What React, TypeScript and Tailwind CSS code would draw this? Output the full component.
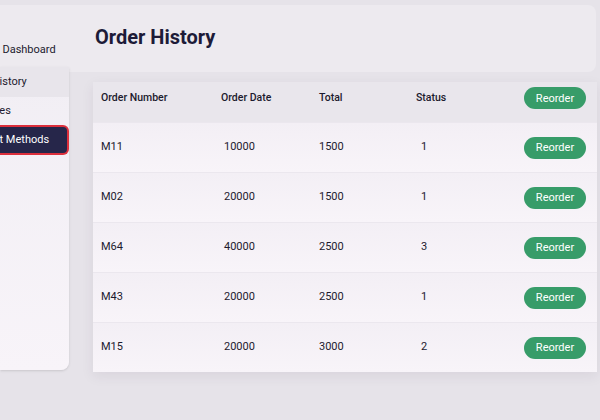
import React from 'react';

interface Order {
  number: string;
  date: string;
  total: string;
  status: string;
}

const orders: Order[] = [
  { number: 'M11', date: '10000', total: '1500', status: '1' },
  { number: 'M02', date: '20000', total: '1500', status: '1' },
  { number: 'M64', date: '40000', total: '2500', status: '3' },
  { number: 'M43', date: '20000', total: '2500', status: '1' },
  { number: 'M15', date: '20000', total: '3000', status: '2' },
];

const ReorderButton: React.FC = () => (
  <button className="w-[62px] h-[22px] rounded-full bg-[#379c69] text-white text-[11px] font-normal leading-none">
    Reorder
  </button>
);

const App: React.FC = () => {
  return (
    <div
      className="w-[600px] h-[420px] overflow-hidden bg-[#e6e3e9] pt-[5px] text-[#1c1a2e]"
      style={{ fontFamily: 'Roboto, "Liberation Sans", sans-serif' }}
    >
      {/* header */}
      <div className="flex h-[67px] w-[596px] rounded-r-lg bg-[#edeaef]">
        <div className="w-[70px] overflow-hidden pt-[37px]">
          <div className="ml-[-41px] whitespace-nowrap text-[11px] text-[#1c1a2e]">Account Dashboard</div>
        </div>
        <h1 className="ml-[25px] pt-[17px] text-[20px] font-bold text-[#1d1b38]">Order History</h1>
      </div>

      <div className="flex">
        {/* sidebar */}
        <div className="-mt-[5px] flex h-[303px] w-[69px] flex-col overflow-hidden rounded-br-lg bg-gradient-to-b from-[#f1eef4] to-[#f8f4f9] shadow-sm">
          <div className="flex h-[30px] items-center bg-[#e8e5eb]">
            <span className="ml-[-38px] whitespace-nowrap text-[11px]">Order History</span>
          </div>
          <div className="flex h-[28px] items-center">
            <span className="ml-[-34px] whitespace-nowrap text-[11px]">Favorites</span>
          </div>
          <div className="flex h-[30px] w-[69px] items-center rounded-r-md border-2 border-l-0 border-[#dc2f3c] bg-[#26264a]">
            <span className="ml-[-40px] whitespace-nowrap text-[11px] text-white">Payment Methods</span>
          </div>
        </div>

        {/* table */}
        <div className="ml-[24px] mt-[10px] w-[504px] overflow-hidden bg-[#f5f1f7] shadow-[0_4px_12px_rgba(60,40,80,0.08)]">
          <div className="flex h-[40px] items-center bg-[#e9e6ec] pb-[8px] text-[10.5px] font-medium">
            <div className="w-[128px] pl-[8px]">Order Number</div>
            <div className="w-[98px]">Order Date</div>
            <div className="w-[97px]">Total</div>
            <div className="w-[108px]">Status</div>
            <ReorderButton />
          </div>
          {orders.map((o) => (
            <div
              key={o.number}
              className="flex h-[50px] items-center border-t border-[#ebe7ee] bg-gradient-to-b from-[#f3eff5] to-[#f8f4f9] text-[11px]"
            >
              <div className="w-[128px] pl-[8px]">{o.number}</div>
              <div className="w-[98px] pl-[3px]">{o.date}</div>
              <div className="w-[97px]">{o.total}</div>
              <div className="w-[108px] pl-[5px]">{o.status}</div>
              <ReorderButton />
            </div>
          ))}
        </div>
      </div>
    </div>
  );
};

export default App;
